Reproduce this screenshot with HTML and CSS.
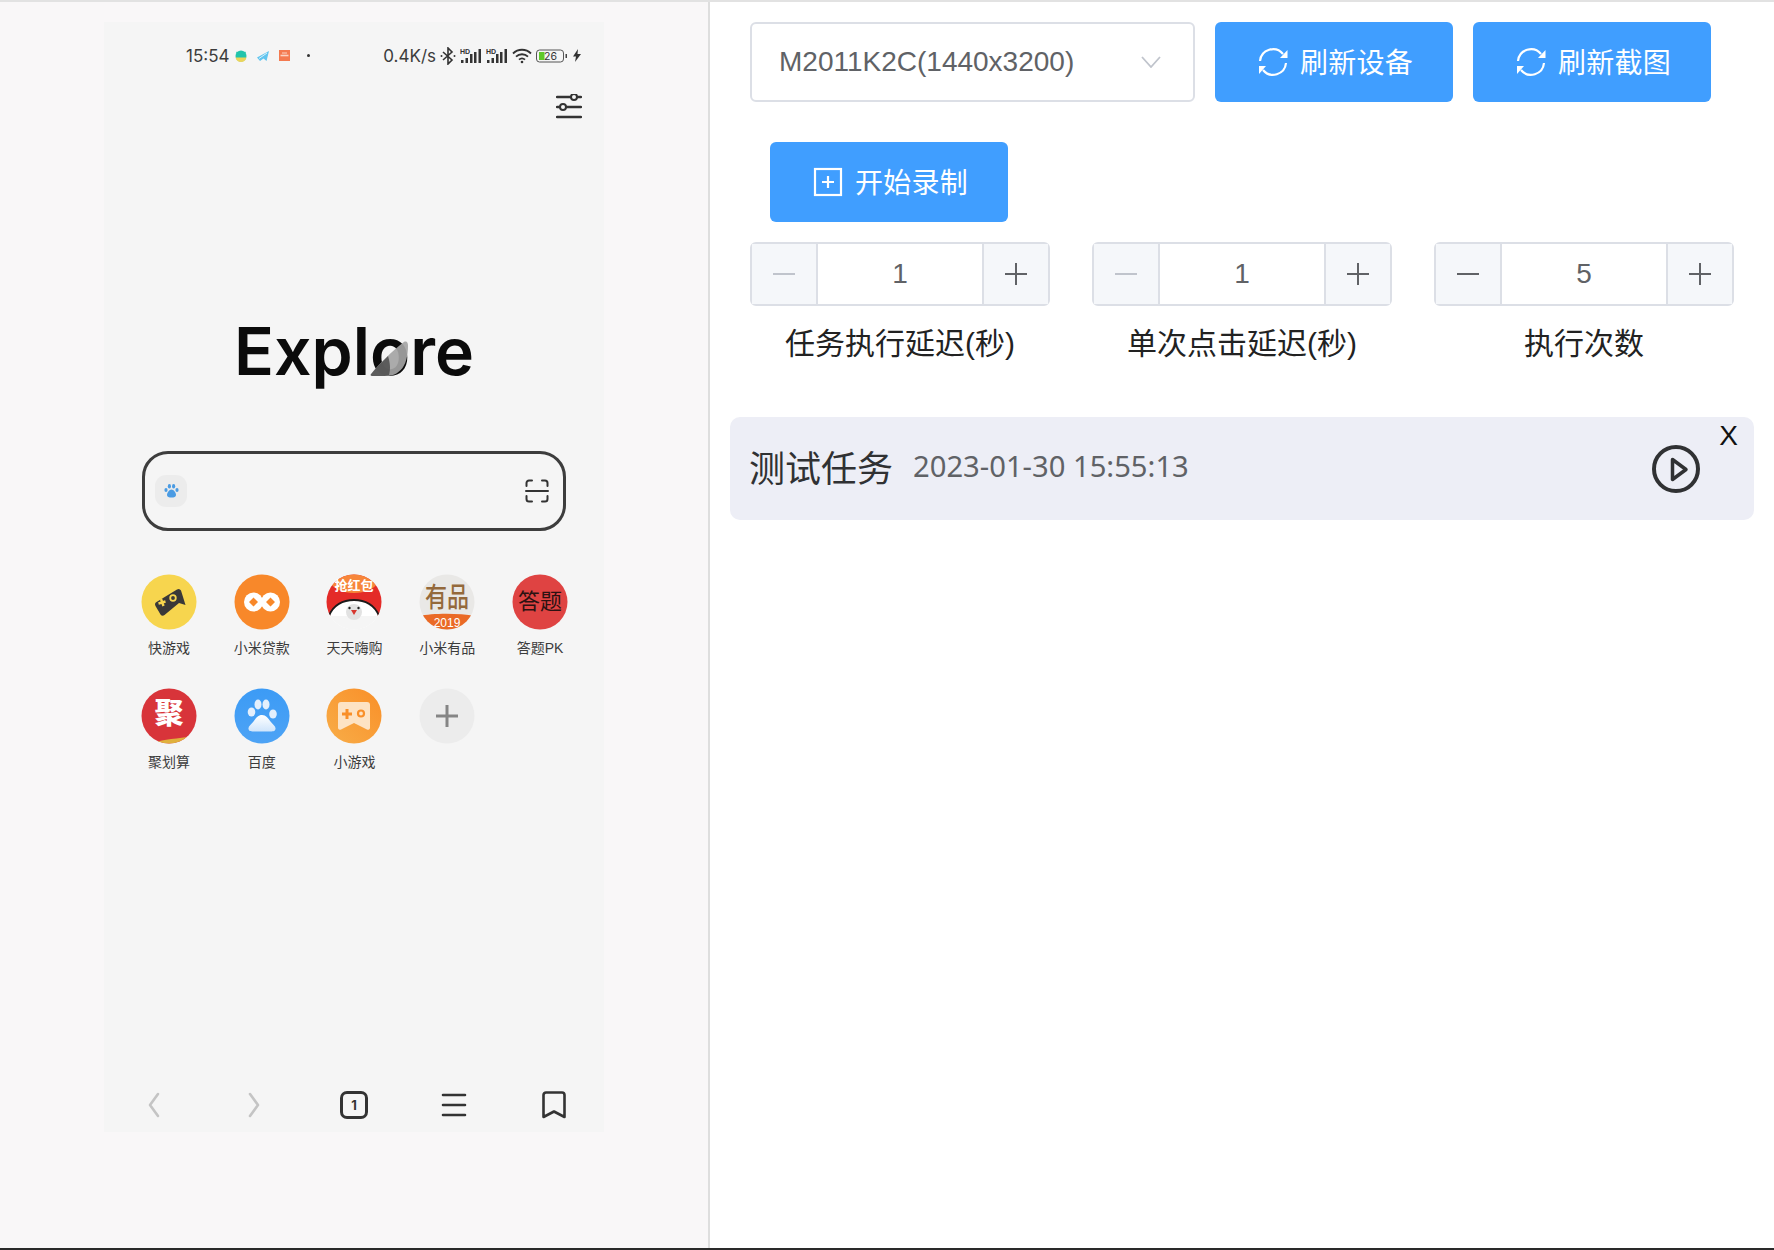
FILE: index.html
```html
<!DOCTYPE html>
<html lang="zh">
<head>
<meta charset="utf-8">
<title>录制</title>
<link rel="stylesheet" href="styles.css">
</head>
<body>
<div class="app">
  <aside class="left">
    <div class="phone">
      <div class="status">
        <div class="st-left">
          <span>15:54</span>
          <svg class="ni" width="12" height="12" viewBox="0 0 12 12"><circle cx="6" cy="6" r="5.500" fill="#22c4ac"/><path d="M.6 7.500h10.800A5.500 5.500 0 01.6 7.500z" fill="#ecd55a"/><path d="M1.500 2L3 3.500M10.500 2L9 3.500" stroke="#22c4ac" stroke-width="1.200"/></svg>
          <svg class="ni ni2" width="12" height="12" viewBox="0 0 12 12"><path d="M0 7.500L12 1 9.500 11 6.500 8.500 3 11z" fill="#62c5ef"/><path d="M2 8.500L10 3" stroke="#d8f1fb" stroke-width="1"/></svg>
          <svg class="ni ni2" width="12" height="12" viewBox="0 0 12 12"><rect width="11" height="11" fill="#f47a50"/><path d="M1.500 5.500h8" stroke="#fbd3c3" stroke-width="1.600"/><path d="M3 3h5" stroke="#fbd3c3"/></svg>
          <span class="sdot"></span>
        </div>
        <div class="st-right">
          <span>0.4K/s</span>
          <svg width="16" height="18" viewBox="0 0 16 18" fill="none" stroke="#333" stroke-width="1.600"><path d="M3 5l9 8-4 4V1l4 4-9 8"/><circle cx="1.500" cy="9" r="1" fill="#333" stroke="none"/><circle cx="14.500" cy="9" r="1" fill="#333" stroke="none"/></svg>
          <svg class="sig" width="22" height="16" viewBox="0 0 22 16"><text class="hd" x="0" y="6">HD</text><g fill="#333"><rect x="1" y="12" width="2.500" height="3"/><rect x="5.500" y="10" width="2.500" height="5"/><rect x="10" y="6" width="2.500" height="9"/><rect x="14" y="4" width="2.500" height="11"/><rect x="18.500" y="1" width="2.500" height="14"/></g></svg>
          <svg class="sig" width="22" height="16" viewBox="0 0 22 16"><text class="hd" x="0" y="6">HD</text><g fill="#333"><rect x="1" y="12" width="2.500" height="3"/><rect x="5.500" y="10" width="2.500" height="5"/><rect x="10" y="6" width="2.500" height="9"/><rect x="14" y="4" width="2.500" height="11"/><rect x="18.500" y="1" width="2.500" height="14"/></g></svg>
          <svg width="20" height="16" viewBox="0 0 20 16" fill="none" stroke="#333" stroke-width="1.800"><path d="M1 5.500c5-5 13-5 18 0M4 8.700c3.400-3.300 8.600-3.300 12 0M7 11.700c1.800-1.600 4.200-1.600 6 0"/><circle cx="10" cy="14" r="1.300" fill="#333" stroke="none"/></svg>
          <svg width="33" height="14" viewBox="0 0 33 14"><rect x=".5" y="1" width="27" height="12" rx="3" fill="none" stroke="#555"/><rect x="3" y="3" width="5.500" height="8" fill="#5fc92a"/><rect x="29.500" y="5" width="1.500" height="4" fill="#444"/><text class="batt" x="8" y="11">26</text></svg>
          <svg width="8" height="13" viewBox="0 0 8 13"><path d="M5 0L0 7.500h3L2 13l6-8H4.500z" fill="#333"/></svg>
        </div>
      </div>
      <div class="filter-row">
        <svg width="26" height="26" viewBox="0 0 26 26" fill="none" stroke="#333" stroke-width="2.400"><path d="M1 3h24M1 13h24M1 23h24" stroke-linecap="round"/><circle cx="18" cy="3" r="3" fill="#f5f5f5" stroke-width="2"/><circle cx="7" cy="13" r="3" fill="#f5f5f5" stroke-width="2"/></svg>
      </div>
      <div class="logo">Expl<span class="logo-o">o<svg class="logo-swoosh" viewBox="0 0 40 40"><path d="M1 37C10 26 24 12 36 3c3-1 4 1 4 4 0 10-2 20-8 26-5 5-10 6-18 6H4c-3 0-4-1-3-2z" fill="#a4a4a4" fill-opacity=".92"/><path d="M1 37C7 30 12 25 19 18c2 7 3 13 1 20-2 1-4 1-6 1H4c-3 0-4-1-3-2z" fill="#4d4d4d" fill-opacity=".85"/></svg></span>re</div>
      <div class="search">
        <span class="paw-box">
          <svg width="15" height="14" viewBox="0 0 15 14" fill="#4a9be3"><ellipse cx="2" cy="6" rx="1.600" ry="2"/><ellipse cx="5.400" cy="2.300" rx="1.600" ry="2.200"/><ellipse cx="9.600" cy="2.300" rx="1.600" ry="2.200"/><ellipse cx="13" cy="6" rx="1.600" ry="2"/><path d="M7.500 5.500c-2 0-4.500 3-4.500 5.500 0 2 2 2.500 4.500 2.500s4.500-.5 4.500-2.500c0-2.500-2.500-5.500-4.500-5.500z"/></svg>
        </span>
        <svg width="24" height="24" viewBox="0 0 24 24" fill="none" stroke="#333" stroke-width="2.200" stroke-linecap="round"><path d="M1.500 7V4a2.500 2.500 0 012.500-2.500h3M17 1.500h3A2.500 2.500 0 0122.500 4v3M1.500 17v3A2.500 2.500 0 004 22.500h3M17 22.500h3a2.500 2.500 0 002.500-2.500v-3M1 12h22" stroke-width="2"/></svg>
      </div>
      <div class="apps">
        <div class="app-item">
          <svg class="app-ic" viewBox="0 0 56 56"><circle cx="28" cy="28" r="27.500" fill="#f7d54e"/><path d="M15.500 28L36 15.500a3 3 0 014 1L44.500 31 38 29 23.500 41a3 3 0 01-4-.5L14.500 32a3 3 0 011-4z" fill="#3a3838"/><circle cx="32" cy="24" r="2.800" fill="none" stroke="#f7d54e" stroke-width="1.800"/><path d="M17.500 29.500l7-2M20 25l2.500 7" stroke="#f7d54e" stroke-width="2.400"/></svg>
          <span>快游戏</span>
        </div>
        <div class="app-item">
          <svg class="app-ic" viewBox="0 0 56 56"><circle cx="28" cy="28" r="27.500" fill="#f8882a"/><circle cx="19.500" cy="28" r="9.500" fill="#fff"/><circle cx="36.500" cy="28" r="9.500" fill="#fff"/><path d="M19.500 23.500l4.500 4.500-4.500 4.500-4.500-4.500zM36.500 23.500l4.500 4.500-4.500 4.500-4.500-4.500z" fill="#f8882a"/></svg>
          <span>小米贷款</span>
        </div>
        <div class="app-item">
          <svg class="app-ic" viewBox="0 0 56 56"><defs><clipPath id="c3"><circle cx="28" cy="28" r="27.500"/></clipPath></defs><g clip-path="url(#c3)"><rect width="56" height="56" fill="#f5f5f5"/><rect width="56" height="42" fill="#e42b28"/><ellipse cx="28" cy="6" rx="24" ry="13" fill="#f7863a"/><path d="M3 42c4-11 14-16 25-16s21 5 25 16v14H3z" fill="#fff"/><path d="M3 42c4-11 14-16 25-16s21 5 25 16" fill="none" stroke="#1d1a1a" stroke-width="1.800"/><rect y="42" width="56" height="14" fill="#f5f5f5"/><circle cx="28" cy="38" r="8" fill="#e2e2e2"/><circle cx="23.500" cy="34" r="1.200" fill="#222"/><circle cx="32.500" cy="34" r="1.200" fill="#222"/><path d="M25 36h6l-3 5z" fill="#d7372f"/></g><text class="app-tx t3" x="28" y="16">抢红包</text></svg>
          <span>天天嗨购</span>
        </div>
        <div class="app-item">
          <svg class="app-ic" viewBox="0 0 56 56"><defs><clipPath id="c4"><circle cx="28" cy="28" r="27.500"/></clipPath></defs><g clip-path="url(#c4)"><rect width="56" height="56" fill="#e9e8e6"/><path d="M0 42c14-3 40-3 56 0v14H0z" fill="#ea6a26"/></g><text class="app-tx t4" transform="translate(28 33) scale(1 1.250)">有品</text><text class="app-tx t4b" x="28" y="53">2019</text></svg>
          <span>小米有品</span>
        </div>
        <div class="app-item">
          <svg class="app-ic" viewBox="0 0 56 56"><circle cx="28" cy="28" r="27.500" fill="#df4342"/><text class="app-tx t5" x="28" y="35">答题</text></svg>
          <span>答题PK</span>
        </div>
        <div class="app-item">
          <svg class="app-ic" viewBox="0 0 56 56"><defs><clipPath id="c6"><circle cx="28" cy="28" r="27.500"/></clipPath></defs><g clip-path="url(#c6)"><rect width="56" height="56" fill="#d8343a"/><path d="M12 56c4-4 20-5 34-7v7z" fill="#e0b13c"/></g><text class="app-tx t6" x="28" y="36">聚</text></svg>
          <span>聚划算</span>
        </div>
        <div class="app-item">
          <svg class="app-ic" viewBox="0 0 56 56"><defs><linearGradient id="g7" x1="0" y1="0" x2="0" y2="1"><stop offset="0" stop-color="#3c9bf5"/><stop offset="1" stop-color="#4da3f5"/></linearGradient><linearGradient id="g7b" x1="0" y1="0" x2="0" y2="1"><stop offset="0" stop-color="#fff"/><stop offset="1" stop-color="#cfe5fb"/></linearGradient></defs><circle cx="28" cy="28" r="27.500" fill="url(#g7)"/><g fill="#e4effc"><ellipse cx="17.500" cy="24" rx="3.800" ry="4.600"/><ellipse cx="24" cy="16.500" rx="3.500" ry="5"/><ellipse cx="32" cy="16.500" rx="3.500" ry="5"/><ellipse cx="39" cy="26" rx="3.800" ry="4.600"/></g><path d="M28 27c-4 0-6 3-8.500 6.500-2.500 3-5.500 5-5 7.500.5 2.500 3 2.500 6 2.500h15c3 0 5.500 0 6-2.500.5-2.500-2.500-4.500-5-7.500C34 30 32 27 28 27z" fill="url(#g7b)"/></svg>
          <span>百度</span>
        </div>
        <div class="app-item">
          <svg class="app-ic" viewBox="0 0 56 56"><defs><linearGradient id="g8" x1="1" y1="0" x2="0" y2="1"><stop offset="0" stop-color="#f98f28"/><stop offset="1" stop-color="#f8ad48"/></linearGradient></defs><circle cx="28" cy="28" r="27.500" fill="url(#g8)"/><path d="M15 14h26a3 3 0 013 3v23a2 2 0 01-3 1.500L28 35l-13 6.500a2 2 0 01-3-1.500V17a3 3 0 013-3z" fill="#fde3c4"/><path d="M16 26h10M21 21v10" stroke="#f98f28" stroke-width="3"/><circle cx="35" cy="25.500" r="3" fill="none" stroke="#f98f28" stroke-width="2.200"/></svg>
          <span>小游戏</span>
        </div>
        <div class="app-item">
          <svg class="app-ic" viewBox="0 0 56 56"><circle cx="28" cy="28" r="27.500" fill="#ececec"/><path d="M17 28h22M28 17v22" stroke="#858585" stroke-width="3"/></svg>
        </div>
      </div>
      <nav class="phone-nav">
        <svg width="14" height="26" viewBox="0 0 14 26" fill="none" stroke="#c4c4c4" stroke-width="2.600" stroke-linecap="round" stroke-linejoin="round"><path d="M11 2L3 13l8 11"/></svg>
        <svg width="14" height="26" viewBox="0 0 14 26" fill="none" stroke="#c4c4c4" stroke-width="2.600" stroke-linecap="round" stroke-linejoin="round"><path d="M3 2l8 11-8 11"/></svg>
        <span class="tab-count">1</span>
        <svg width="26" height="24" viewBox="0 0 26 24" fill="none" stroke="#333" stroke-width="2.600" stroke-linecap="round"><path d="M2 2h22M2 12h22M2 22h22"/></svg>
        <svg width="24" height="28" viewBox="0 0 24 28" fill="none" stroke="#333" stroke-width="2.600" stroke-linejoin="round" stroke-linecap="round"><path d="M1.500 4a2.500 2.500 0 012.500-2.500h16A2.500 2.500 0 0122.500 4v22L12 20.500 1.500 26z"/></svg>
      </nav>
    </div>
  </aside>
  <main class="right">
    <div class="toolbar">
      <div class="select">
        <span>M2011K2C(1440x3200)</span>
        <svg width="20" height="12" viewBox="0 0 20 12" fill="none" stroke="#c0c4cc" stroke-width="1.800"><path d="M1 1l9 10 9-10"/></svg>
      </div>
      <button class="btn">
        <svg class="ref" viewBox="0 0 30 30" fill="none" stroke="#fff" stroke-width="2.200"><path d="M2 14A13 13 0 0125 7"/><path d="M28 16A13 13 0 015 23"/><path d="M29.500 3v8H22z" fill="#fff" stroke="none"/><path d="M1 27v-8h7z" fill="#fff" stroke="none"/></svg>
        <span class="btn-tx">刷新设备</span>
      </button>
      <button class="btn">
        <svg class="ref" viewBox="0 0 30 30" fill="none" stroke="#fff" stroke-width="2.200"><path d="M2 14A13 13 0 0125 7"/><path d="M28 16A13 13 0 015 23"/><path d="M29.500 3v8H22z" fill="#fff" stroke="none"/><path d="M1 27v-8h7z" fill="#fff" stroke="none"/></svg>
        <span class="btn-tx">刷新截图</span>
      </button>
    </div>
    <div class="record-row">
      <button class="btn">
        <svg class="ref" viewBox="0 0 30 30" fill="none" stroke="#fff" stroke-width="2.200"><rect x="2" y="2" width="26" height="26"/><path d="M9 15h12M15 9v12"/></svg>
        <span class="btn-tx">开始录制</span>
      </button>
    </div>
    <div class="numbers">
      <div class="num">
        <div class="stepper">
          <span class="step off"><i class="minus"></i></span>
          <span class="val">1</span>
          <span class="step"><i class="plus"></i></span>
        </div>
        <label>任务执行延迟(秒)</label>
      </div>
      <div class="num">
        <div class="stepper">
          <span class="step off"><i class="minus"></i></span>
          <span class="val">1</span>
          <span class="step"><i class="plus"></i></span>
        </div>
        <label>单次点击延迟(秒)</label>
      </div>
      <div class="num">
        <div class="stepper">
          <span class="step"><i class="minus"></i></span>
          <span class="val">5</span>
          <span class="step"><i class="plus"></i></span>
        </div>
        <label>执行次数</label>
      </div>
    </div>
    <div class="task">
      <span class="task-name">测试任务</span>
      <span class="task-date">2023-01-30 15:55:13</span>
      <svg class="play" width="48" height="48" viewBox="0 0 48 48" fill="none" stroke="#303133" stroke-width="4"><circle cx="24" cy="24" r="22"/><path d="M20.500 14.500L34 24.500 20.500 34.500z" stroke-width="3.500" stroke-linejoin="round"/></svg>
      <span class="close">X</span>
    </div>
  </main>
</div>
</body>
</html>
```

FILE: styles.css
```css
* { box-sizing: border-box; }
html, body { margin: 0; height: 100%; }
body {
  width: 1774px;
  height: 1250px;
  overflow: hidden;
  background: #fff;
  font-family: "Liberation Sans", "Noto Sans CJK SC", sans-serif;
}
.app {
  display: flex;
  height: 1250px;
  border-top: 2px solid #e2e2e2;
  border-bottom: 2px solid #2a2a2a;
}
.left {
  width: 710px;
  flex: none;
  background: #f9f7f8;
  border-right: 2px solid #dedede;
  padding: 20px 0 0 104px;
}
.phone {
  width: 500px;
  height: 1110px;
  background: #f5f5f5;
  display: flex;
  flex-direction: column;
  color: #333;
}
.status {
  height: 67px;
  padding: 0 23px 0 82px;
  display: flex;
  align-items: center;
  justify-content: space-between;
  font-family: "Inter", "Liberation Sans", sans-serif;
  font-size: 17px;
  color: #3c3c3c;
}
.st-left, .st-right { display: flex; align-items: center; }
.st-left { gap: 6px; }
.ni2 { margin-left: 4px; }
.sdot { width: 3px; height: 3px; border-radius: 50%; background: #333; margin-left: 10px; }
.st-right { gap: 4px; }
.hd { font-size: 7px; font-weight: 700; fill: #333; font-family: "Liberation Sans", sans-serif; }
.batt { font-size: 10.500px; fill: #333; text-anchor: start; font-family: "Inter", sans-serif; }
.filter-row {
  display: flex;
  justify-content: flex-end;
  padding: 5px 22px 0 0;
  height: 39px;
}
.logo {
  margin-top: 183px;
  text-align: center;
  font-family: "Inter", "Liberation Sans", sans-serif;
  font-weight: 600;
  font-size: 66px;
  line-height: 80px;
  color: #0b0b0b;
}
.logo-o { position: relative; display: inline-block; }
.logo-swoosh {
  position: absolute;
  left: 0;
  bottom: 14px;
  width: 38px;
  height: 38px;
}
.search {
  margin: 60px 38px 0;
  height: 80px;
  border: 3px solid #3d3d3d;
  border-radius: 26px;
  display: flex;
  align-items: center;
  justify-content: space-between;
  padding: 0 14px 0 10px;
}
.paw-box {
  width: 32px;
  height: 32px;
  border-radius: 11px;
  background: #ececec;
  display: flex;
  align-items: center;
  justify-content: center;
}
.apps {
  display: grid;
  grid-template-columns: repeat(5, 92.800px);
  grid-auto-rows: 114px;
  margin: 43px 0 0 18.500px;
}
.app-item {
  display: flex;
  flex-direction: column;
  align-items: center;
  gap: 8px;
  font-size: 14px;
  line-height: 20px;
  color: #3c3c3c;
}
.app-ic { width: 56px; height: 56px; }
.app-tx { text-anchor: middle; font-family: "Noto Sans CJK SC", serif; }
.t3 { fill: #fff; font-size: 13px; font-weight: 700; }
.t4 { fill: #94693b; font-size: 22px; font-weight: 500; }
.t4b { fill: #fff; font-size: 12px; font-family: "Liberation Sans", sans-serif; }
.t5 { fill: #2c1212; font-size: 22px; }
.t6 { fill: #fff; font-size: 29px; font-weight: 900; }
.phone-nav {
  margin-top: auto;
  height: 54px;
  display: grid;
  grid-template-columns: repeat(5, 100px);
  align-items: center;
  justify-items: center;
}
.tab-count {
  width: 28px;
  height: 28px;
  border: 3px solid #333;
  border-radius: 7px;
  display: flex;
  align-items: center;
  justify-content: center;
  font-size: 13px;
  font-weight: 700;
  font-family: "Inter", sans-serif;
}
.right {
  flex: 1;
  padding: 20px 20px 0 20px;
  min-width: 0;
}
.toolbar {
  display: flex;
  gap: 20px;
  padding-left: 20px;
}
.select {
  width: 445px;
  height: 80px;
  border: 2px solid #dcdfe6;
  border-radius: 6px;
  display: flex;
  align-items: center;
  justify-content: space-between;
  padding: 0 32px 0 27px;
  font-size: 28px;
  color: #606266;
  background: #fff;
}
.btn {
  width: 238px;
  height: 80px;
  border: 0;
  border-radius: 6px;
  background: #409eff;
  color: #fff;
  font: inherit;
  font-size: 28px;
  display: inline-flex;
  align-items: center;
  justify-content: center;
  gap: 12px;
  padding: 0 0 0 3px;
}
.btn-tx { position: relative; top: -1px; letter-spacing: .25px; }
.ref { width: 30px; height: 30px; flex: none; }
.record-row { padding: 40px 0 0 40px; }
.numbers {
  display: flex;
  gap: 42px;
  margin-top: 20px;
  padding-left: 20px;
}
.num { width: 300px; text-align: center; }
.stepper {
  height: 64px;
  border: 2px solid #dcdfe6;
  border-radius: 6px;
  display: flex;
}
.step {
  width: 66px;
  flex: none;
  background: #f5f7fa;
  display: flex;
  align-items: center;
  justify-content: center;
}
.step:first-child { border-right: 2px solid #dcdfe6; }
.step:last-child { border-left: 2px solid #dcdfe6; }
.minus, .plus { position: relative; display: block; width: 22px; height: 22px; }
.minus::before, .plus::before, .plus::after {
  content: "";
  position: absolute;
  background: #606266;
  left: 0;
  right: 0;
  top: 10px;
  height: 2px;
}
.plus::after { left: 10px; right: auto; width: 2px; top: 0; height: 22px; }
.off .minus::before { background: #c0c4cc; }
.val {
  flex: 1;
  text-align: center;
  font-size: 28px;
  line-height: 60px;
  color: #606266;
}
.num label {
  display: block;
  margin-top: 15px;
  font-size: 30px;
  line-height: 46px;
  color: #222;
}
.task {
  position: relative;
  margin-top: 50px;
  height: 103px;
  background: #edeef6;
  border-radius: 10px;
  display: flex;
  align-items: center;
  padding: 0 20px 5px 19px;
}
.task-name { font-size: 36px; color: #303133; }
.task-date { margin-left: 20px; font-size: 29.200px; color: #606266; font-family: "Noto Sans", sans-serif; }
.play { margin-left: auto; margin-right: 34px; position: relative; top: 3px; }
.close {
  position: absolute;
  top: 1px;
  right: 16px;
  font-size: 28px;
  line-height: 36px;
  color: #111;
}
```
